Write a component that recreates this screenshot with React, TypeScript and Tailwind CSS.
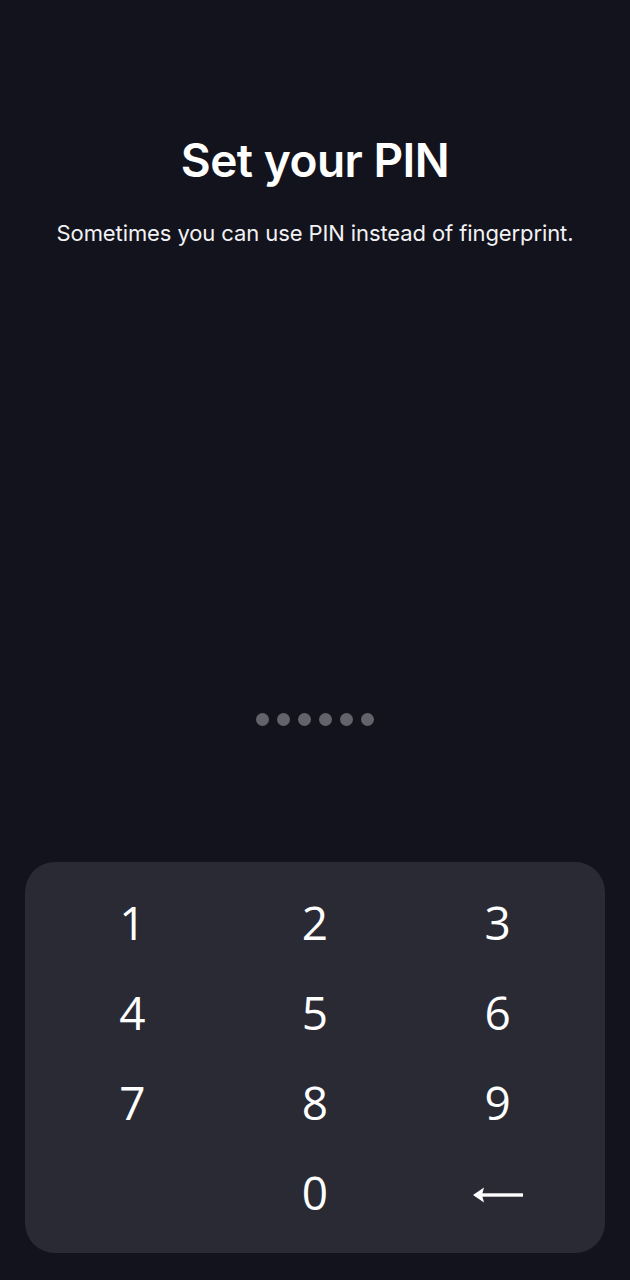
import { ReactNode } from 'react';

const keys: ReactNode[] = ['1', '2', '3', '4', '5', '6', '7', '8', '9', '', '0', 'back'];

function BackArrow() {
  return (
    <svg className="mt-[6px]" width="50" height="16" viewBox="0 0 50 16" fill="none">
      <path d="M0 8 L11 0.5 L9 8 L11 15.5 Z" fill="white" />
      <rect x="8" y="6.3" width="42" height="3.4" fill="white" />
    </svg>
  );
}

export default function App() {
  return (
    <div
      className="h-[1280px] w-full bg-[#13131d] flex flex-col text-white"
      style={{ fontFamily: 'Inter, "Noto Sans", sans-serif' }}
    >
      {/* Header */}
      <div className="pt-[131px] text-center">
        <h1 className="text-[46px] leading-[58px] font-semibold tracking-[-0.5px]">Set your PIN</h1>
        <p className="mt-[29px] text-[22px] leading-[30px] text-[#f2f2f4] tracking-[-0.1px]">
          Sometimes you can use PIN instead of fingerprint.
        </p>
      </div>

      {/* PIN dots */}
      <div className="mt-[465px] flex justify-center gap-[8px]">
        {[0, 1, 2, 3, 4, 5].map((i) => (
          <span key={i} className="w-[13px] h-[13px] rounded-full bg-[#63636b]" />
        ))}
      </div>

      {/* Keypad */}
      <div className="mx-[25px] mt-[136px] rounded-[30px] bg-[#292a33] px-4 pt-[15px] pb-[16px] grid grid-cols-3">
        {keys.map((k, i) => (
          <div
            key={i}
            className="h-[90px] flex items-center justify-center text-[46px] font-normal"
            style={{ fontFamily: '"Open Sans", sans-serif' }}
          >
            {k === 'back' ? <BackArrow /> : k}
          </div>
        ))}
      </div>
    </div>
  );
}
